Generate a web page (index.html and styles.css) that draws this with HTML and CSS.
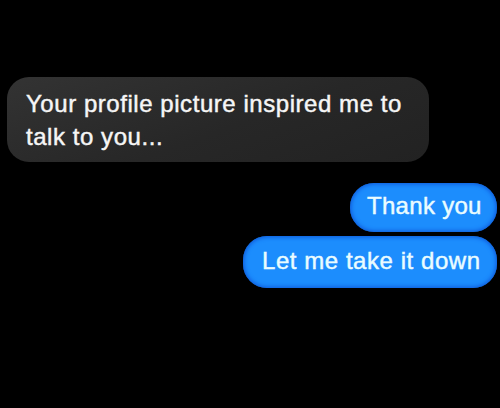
FILE: index.html
```html
<!DOCTYPE html>
<html>
<head>
<meta charset="utf-8">
<link rel="stylesheet" href="styles.css">
</head>
<body>
<div class="chat">
  <div class="bubble received">Your profile picture inspired me to<br>talk to you...</div>
  <div class="sent-group">
    <div class="bubble sent first">Thank you</div>
    <div class="bubble sent second">Let me take it down</div>
  </div>
</div>
</body>
</html>
```
FILE: styles.css
```css
html, body {
  margin: 0;
  padding: 0;
  background: #000;
  width: 500px;
  height: 408px;
  overflow: hidden;
}
.chat {
  display: flex;
  flex-direction: column;
  padding: 77px 3px 0 7px;
  font-family: "Liberation Sans", Arial, sans-serif;
  font-size: 24px;
  letter-spacing: 0.55px;
}
.bubble {
  line-height: 33px;
  white-space: nowrap;
  -webkit-text-stroke: 0.45px currentColor;
}
.received {
  align-self: flex-start;
  width: 422px;
  box-sizing: border-box;
  padding: 10px 19px 9px;
  background: linear-gradient(160deg, #333 0%, #272727 55%, #222 100%);
  color: #f6f6f6;
  border-radius: 22px;
}
.sent-group {
  margin-top: 21px;
  display: flex;
  flex-direction: column;
  align-items: flex-end;
  gap: 4px;
}
.sent {
  background: #1c8dfd;
  color: #eafcff;
  border-radius: 24px;
  line-height: 30px;
  box-shadow: inset 0 0 4px 1px #0d55d8;
}
.first {
  width: 147px;
  box-sizing: border-box;
  padding: 8px 0 11px 17px;
  letter-spacing: 0.3px;
}
.second {
  width: 254px;
  box-sizing: border-box;
  padding: 10px 0 12px 19px;
}
```
